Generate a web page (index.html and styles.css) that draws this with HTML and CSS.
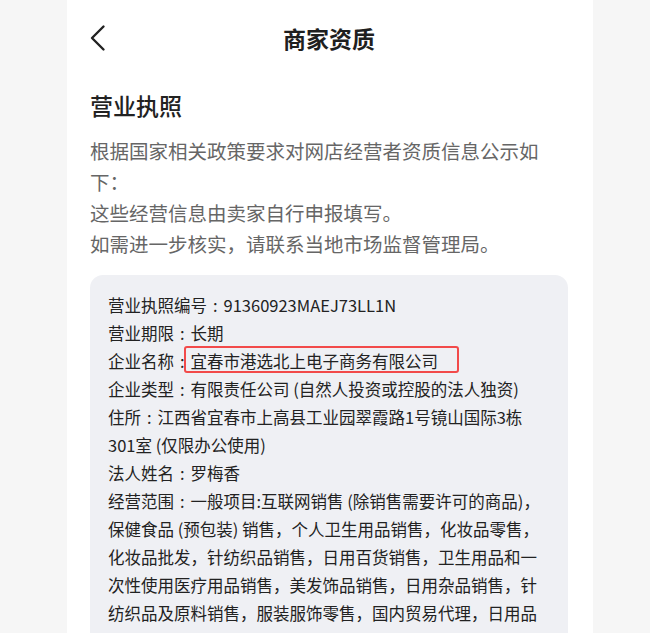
FILE: index.html
```html
<!DOCTYPE html>
<html lang="zh-CN">
<head>
<meta charset="utf-8">
<title>商家资质</title>
<link rel="stylesheet" href="styles.css">
</head>
<body>
<div class="panel">
  <header class="topbar">
    <span class="back" aria-label="返回">
      <svg width="18" height="28" viewBox="0 0 18 28"><polyline points="14.5,2.5 3,14 14.5,25.5" fill="none" stroke="#222" stroke-width="2.4" stroke-linecap="round" stroke-linejoin="round"/></svg>
    </span>
    <h1 class="title">商家资质</h1>
    <span class="spacer"></span>
  </header>
  <h2 class="heading">营业执照</h2>
  <p class="intro">根据国家相关政策要求对网店经营者资质信息公示如下：<br>这些经营信息由卖家自行申报填写。<br>如需进一步核实，请联系当地市场监督管理局。</p>
  <div class="card">
    <div class="row">营业执照编号<span class="sep">:</span>91360923MAEJ73LL1N</div>
    <div class="row">营业期限<span class="sep">:</span>长期</div>
    <div class="row">企业名称<span class="sep">:</span><span class="mark">宜春市港选北上电子商务有限公司</span></div>
    <div class="row">企业类型<span class="sep">:</span>有限责任公司 (自然人投资或控股的法人独资)</div>
    <div class="row">住所<span class="sep">:</span>江西省宜春市上高县工业园翠霞路1号镜山国际3栋 301室 (仅限办公使用)</div>
    <div class="row">法人姓名<span class="sep">:</span>罗梅香</div>
    <div class="row">经营范围<span class="sep">:</span>一般项目:互联网销售 (除销售需要许可的商品)，保健食品 (预包装) 销售，个人卫生用品销售，化妆品零售，化妆品批发，针纺织品销售，日用百货销售，卫生用品和一次性使用医疗用品销售，美发饰品销售，日用杂品销售，针纺织品及原料销售，服装服饰零售，国内贸易代理，日用品销售，互联网销售（除销售需要许可的商品）</div>
  </div>
</div>
</body>
</html>
```
FILE: styles.css
```css
html, body {
  margin: 0;
  padding: 0;
  background: #f6f6f6;
  font-family: "Noto Sans CJK SC", "Noto Sans", sans-serif;
  color: #222;
}
.panel {
  margin-left: 67px;
  width: 526px;
  min-height: 633px;
  background: #fff;
  box-sizing: border-box;
  padding: 0 25px 0 23px;
  overflow: hidden;
}
.topbar {
  height: 76px;
  display: grid;
  grid-template-columns: 1fr auto 1fr;
  align-items: center;
}
.back {
  display: flex;
  align-items: center;
  margin-left: -1px;
  margin-top: -1px;
}
.title {
  margin: 0;
  font-size: 23px;
  font-weight: 700;
  line-height: 30px;
  color: #1f1f1f;
}
.heading {
  margin: 13px 0 0 0;
  font-size: 23px;
  font-weight: 500;
  line-height: 32px;
  color: #222;
}
.intro {
  margin: 14px 0 0 0;
  width: 460px;
  font-size: 19.5px;
  line-height: 31px;
  color: #666;
}
.card {
  margin-top: 16px;
  background: #eff0f4;
  border-radius: 13px;
  padding: 16px 18px 16px 18px;
  font-size: 16.5px;
  line-height: 28px;
  color: #222;
}
.sep {
  display: inline-block;
  width: 1em;
  text-align: center;
}
.mark {
  position: relative;
}
.mark::after {
  content: "";
  position: absolute;
  left: -7px;
  right: -21px;
  top: -3px;
  bottom: 0;
  border: 2px solid #f24a4a;
  border-radius: 3px;
  pointer-events: none;
}
```
